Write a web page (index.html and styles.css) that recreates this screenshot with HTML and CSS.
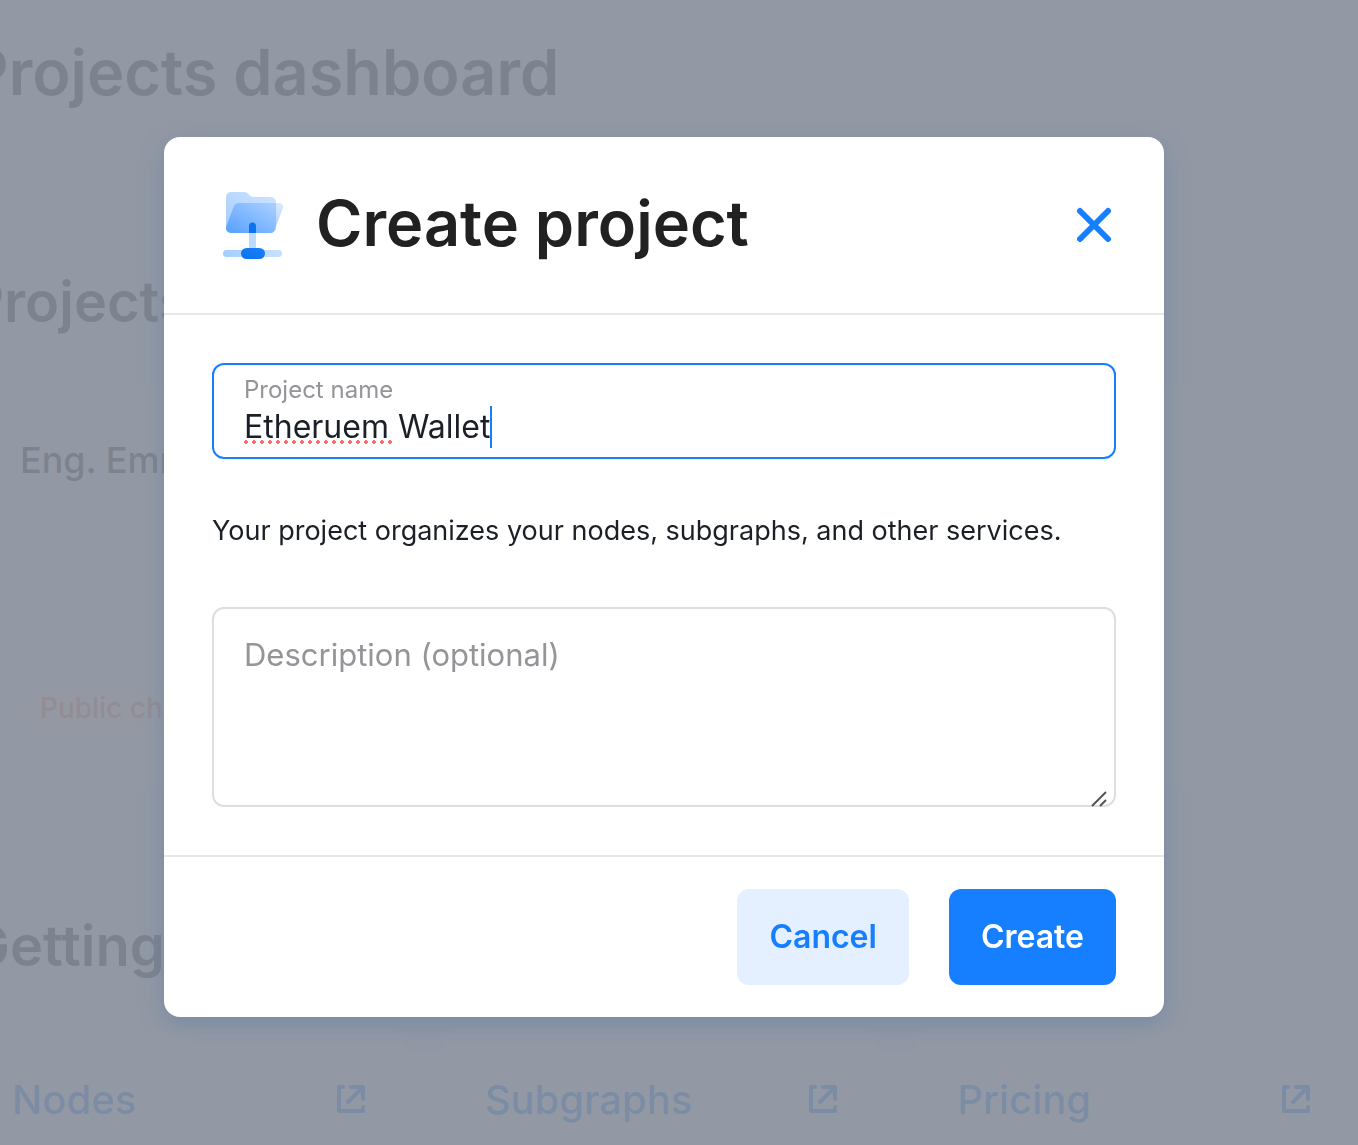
FILE: index.html
```html
<!DOCTYPE html>
<html lang="en">
<head>
<meta charset="utf-8">
<meta name="viewport" content="width=device-width, initial-scale=1">
<title>Create project</title>
<link rel="stylesheet" href="styles.css">
</head>
<body>
<svg class="defs" aria-hidden="true">
  <symbol id="external" viewBox="0 0 28 28">
    <path d="M6 2H2v24h24v-4M14 2h12v12M26 2 11 17" fill="none" stroke="currentColor" stroke-width="4" stroke-linecap="round" stroke-linejoin="round"/>
  </symbol>
</svg>
<div class="page">
  <header class="page-header"><h1 class="page-title">Projects dashboard</h1></header>
  <main class="content">
    <h2 class="section-title">Projects</h2>
    <section class="project-card">
      <h3 class="project-name">Eng. Emm</h3>
      <span class="tag">Public chain</span>
    </section>
    <h2 class="section-title">Getting</h2>
    <nav class="guides">
      <a class="guide" href="#nodes">Nodes<svg class="guide-icon" aria-hidden="true"><use href="#external"/></svg></a>
      <a class="guide" href="#subgraphs">Subgraphs<svg class="guide-icon" aria-hidden="true"><use href="#external"/></svg></a>
      <a class="guide" href="#pricing">Pricing<svg class="guide-icon" aria-hidden="true"><use href="#external"/></svg></a>
    </nav>
  </main>
</div>
<div class="overlay">
  <form class="modal" role="dialog" aria-modal="true" aria-labelledby="modal-title">
    <header class="modal-header">
      <svg class="modal-icon" viewBox="0 0 80 80" aria-hidden="true">
        <defs>
          <linearGradient id="back" x1="1" y1="0" x2="0" y2="1"><stop stop-color="#cfe4ff"/><stop offset="1" stop-color="#a4ccff"/></linearGradient>
          <linearGradient id="front" x1="1" y1="0" x2="0" y2="1"><stop stop-color="#4b9aff" stop-opacity=".2"/><stop offset="1" stop-color="#2d89ff" stop-opacity=".65"/></linearGradient>
          <linearGradient id="rail" x1="0" x2="1"><stop stop-color="#a4ceff"/><stop offset="1" stop-color="#c8e0ff"/></linearGradient>
          <linearGradient id="hub" x1="1" y1="0" x2="0" y2="1"><stop stop-color="#1781ff"/><stop offset="1" stop-color="#0f6fea"/></linearGradient>
        </defs>
        <path d="M14 12a5 5 0 0 1 5-5h13c5 0 5 5 10 5h17a5 5 0 0 1 5 5v26a5 5 0 0 1-5 5H19a5 5 0 0 1-5-5z" fill="url(#back)"/>
        <path d="M22 21a5 5 0 0 1 5-3h40a4 4 0 0 1 4 5l-8 21a5 5 0 0 1-5 4H19a5 5 0 0 1-5-6z" fill="url(#front)"/>
        <rect x="11" y="65" width="59" height="7" rx="3.5" fill="url(#rail)"/>
        <path d="M37 48h7v17h-7z" fill="#bddaff"/>
        <path d="M37 48v-7a3.500 3.500 0 0 1 7 0v7z" fill="#0b73ee"/>
        <rect x="29" y="63" width="24" height="11" rx="5.5" fill="url(#hub)"/>
      </svg>
      <h2 class="modal-title" id="modal-title">Create project</h2>
      <button class="close" type="button" aria-label="Close">
        <svg class="close-icon" viewBox="0 0 36 36" aria-hidden="true"><path d="m4 4 28 28M32 4 4 32" stroke="currentColor" stroke-width="6" stroke-linecap="round"/></svg>
      </button>
    </header>
    <div class="modal-body">
      <div class="field">
        <label class="field-label" for="name">Project name</label>
        <input class="field-input" id="name" type="text" value="Etheruem Wallet" spellcheck="false">
        <span class="misspelling"></span>
        <span class="caret"></span>
      </div>
      <p class="hint">Your project organizes your nodes, subgraphs, and other services.</p>
      <div class="description">
        <textarea class="description-input" aria-label="Description (optional)" placeholder="Description (optional)"></textarea>
        <svg class="grip" viewBox="0 0 16 16" aria-hidden="true"><path d="M1 15 15 1M9 15l6-6" stroke="#555" stroke-width="2"/></svg>
      </div>
    </div>
    <footer class="modal-footer">
      <button class="button button-light" type="button">Cancel</button>
      <button class="button button-primary" type="submit">Create</button>
    </footer>
  </form>
</div>
</body>
</html>
```
FILE: styles.css
```css
* { box-sizing: border-box; }
body {
  margin: 0;
  overflow: hidden;
  font-family: Inter, "Liberation Sans", sans-serif;
  color: #1b1f27;
}
h1, h2, h3, p { margin: 0; font-weight: 600; }
.defs { display: block; width: 0; height: 0; }

/* Dashboard, scrolled slightly under the left edge */
.page { height: 100vh; overflow: hidden; background: #eef0ff; color: #212121; }
.page-header { padding: 32px 0 48px; border-bottom: 2px solid #e4e6ee; }
.page-title { margin-left: -32px; font-size: 63px; line-height: 80px; white-space: nowrap; }
.content { margin: 0 8px 0 -28px; padding-top: 108px; }
.section-title { margin-left: -4px; font-size: 56px; line-height: 64px; }
.project-card {
  display: flex;
  flex-direction: column;
  align-items: flex-start;
  justify-content: space-between;
  height: 400px;
  margin: 52px 0 128px;
  padding: 48px 48px 52px;
  border-radius: 16px;
  background: #fff;
}
.project-name { font-size: 36px; font-weight: 500; line-height: 52px; }
.tag { padding: 8px 20px; border-radius: 26px; background: #faf6ee; color: #ff7a4d; font-size: 28px; font-weight: 500; line-height: 36px; }
.guides { display: grid; grid-template-columns: repeat(3, 1fr); gap: 40px; margin-top: 52px; }
.guide {
  display: flex;
  align-items: center;
  justify-content: space-between;
  height: 138px;
  padding: 0 40px;
  border-radius: 16px;
  background: #fff;
  color: #167fff;
  font-size: 40px;
  font-weight: 500;
  text-decoration: none;
}
.guide-icon { width: 28px; height: 28px; }

/* Dialog */
.overlay {
  position: fixed;
  inset: 0;
  display: grid;
  place-items: center;
  padding: 8px 30px 0 0;
  background: rgba(135, 142, 154, .9);
}
.modal {
  width: 100%;
  max-width: 1000px;
  border-radius: 16px;
  background: #fff;
  box-shadow: 0 8px 24px rgba(80, 120, 165, .4);
}
.modal-header { display: flex; align-items: center; height: 178px; padding: 0 48px; border-bottom: 2px solid #e8e8e8; }
.modal-icon { width: 80px; height: 80px; margin-right: 24px; }
.modal-title { flex: 1; padding-bottom: 4px; color: #212121; font-size: 63px; line-height: 80px; }
.close { display: grid; padding: 4px; border: 0; background: none; color: #167fff; }
.close-icon { width: 36px; height: 36px; }
.modal-body { padding: 48px; }
.field { position: relative; height: 96px; padding: 8px 30px; border: 2px solid #167fff; border-radius: 12px; }
.field-label { display: block; color: #949499; font-size: 24px; line-height: 34px; }
.field-input { display: block; width: 100%; height: 40px; padding: 0; border: 0; outline: 0; background: none; color: #1b1f27; font: 400 32px/40px Inter, sans-serif; }
.misspelling {
  position: absolute;
  top: 75px;
  left: 30px;
  width: 148px;
  height: 4px;
  background: radial-gradient(circle at 2px 2px, #ff6b6b 2px, transparent 2px) 0 0 / 8px 4px;
}
.caret { position: absolute; top: 41px; left: 276px; width: 2px; height: 42px; background: #167fff; }
.hint { margin: 52px 0 56px; font-size: 27px; font-weight: 400; line-height: 40px; }
.description { position: relative; }
.description-input {
  display: block;
  width: 100%;
  height: 200px;
  padding: 26px 30px;
  border: 2px solid #dedede;
  border-radius: 12px;
  resize: none;
  font: 400 31px/40px Inter, sans-serif;
}
.description-input::placeholder { color: #949499; }
.grip { position: absolute; right: 9px; bottom: 0; width: 16px; height: 16px; }
.modal-footer { display: flex; justify-content: flex-end; gap: 40px; padding: 32px 48px; border-top: 2px solid #e8e8e8; }
.button { height: 96px; padding: 0 32px; border: 0; border-radius: 12px; font: 600 32px/40px Inter, sans-serif; }
.button-light { background: #e4f0ff; color: #167fff; }
.button-primary { background: #167fff; color: #fff; }
```
